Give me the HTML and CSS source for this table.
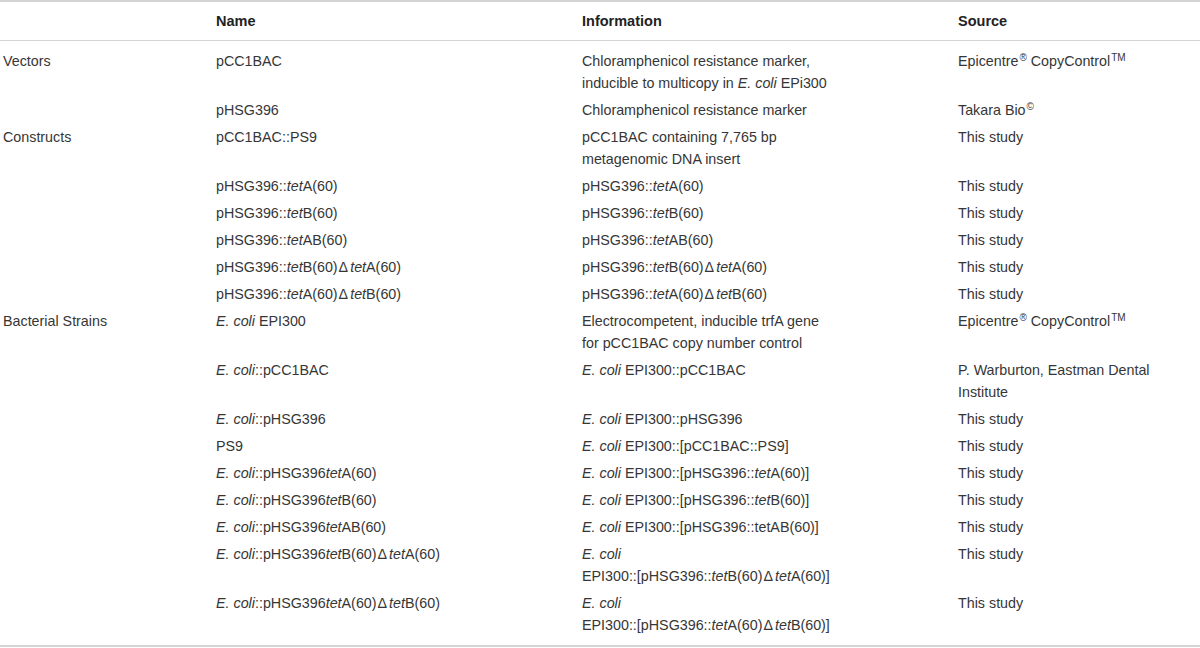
FILE: index.html
```html
<!DOCTYPE html>
<html lang="en">
<head>
<meta charset="utf-8">
<title>Strains and plasmids</title>
<link rel="stylesheet" href="styles.css">
</head>
<body>
<table class="tbl">
  <colgroup>
    <col class="c1"><col class="c2"><col class="c3"><col class="c4">
  </colgroup>
  <thead>
    <tr><th></th><th>Name</th><th>Information</th><th>Source</th></tr>
  </thead>
  <tbody>
    <tr class="first"><td>Vectors</td><td>pCC1BAC</td><td>Chloramphenicol resistance marker,<br>inducible to multicopy in <i>E. coli</i> EPi300</td><td>Epicentre<sup>®</sup> CopyControl<sup>TM</sup></td></tr>
    <tr><td></td><td>pHSG396</td><td>Chloramphenicol resistance marker</td><td>Takara Bio<sup>©</sup></td></tr>
    <tr><td>Constructs</td><td>pCC1BAC::PS9</td><td>pCC1BAC containing 7,765 bp<br>metagenomic DNA insert</td><td>This study</td></tr>
    <tr><td></td><td>pHSG396::<i>tet</i>A(60)</td><td>pHSG396::<i>tet</i>A(60)</td><td>This study</td></tr>
    <tr><td></td><td>pHSG396::<i>tet</i>B(60)</td><td>pHSG396::<i>tet</i>B(60)</td><td>This study</td></tr>
    <tr><td></td><td>pHSG396::<i>tet</i>AB(60)</td><td>pHSG396::<i>tet</i>AB(60)</td><td>This study</td></tr>
    <tr><td></td><td>pHSG396::<i>tet</i>B(60)<span class="d">Δ</span><i>tet</i>A(60)</td><td>pHSG396::<i>tet</i>B(60)<span class="d">Δ</span><i>tet</i>A(60)</td><td>This study</td></tr>
    <tr><td></td><td>pHSG396::<i>tet</i>A(60)<span class="d">Δ</span><i>tet</i>B(60)</td><td>pHSG396::<i>tet</i>A(60)<span class="d">Δ</span><i>tet</i>B(60)</td><td>This study</td></tr>
    <tr><td>Bacterial Strains</td><td><i>E. coli</i> EPI300</td><td>Electrocompetent, inducible trfA gene<br>for pCC1BAC copy number control</td><td>Epicentre<sup>®</sup> CopyControl<sup>TM</sup></td></tr>
    <tr><td></td><td><i>E. coli</i>::pCC1BAC</td><td><i>E. coli</i> EPI300::pCC1BAC</td><td>P. Warburton, Eastman Dental<br>Institute</td></tr>
    <tr><td></td><td><i>E. coli</i>::pHSG396</td><td><i>E. coli</i> EPI300::pHSG396</td><td>This study</td></tr>
    <tr><td></td><td>PS9</td><td><i>E. coli</i> EPI300::[pCC1BAC::PS9]</td><td>This study</td></tr>
    <tr><td></td><td><i>E. coli</i>::pHSG396<i>tet</i>A(60)</td><td><i>E. coli</i> EPI300::[pHSG396::<i>tet</i>A(60)]</td><td>This study</td></tr>
    <tr><td></td><td><i>E. coli</i>::pHSG396<i>tet</i>B(60)</td><td><i>E. coli</i> EPI300::[pHSG396::<i>tet</i>B(60)]</td><td>This study</td></tr>
    <tr><td></td><td><i>E. coli</i>::pHSG396<i>tet</i>AB(60)</td><td><i>E. coli</i> EPI300::[pHSG396::tetAB(60)]</td><td>This study</td></tr>
    <tr><td></td><td><i>E. coli</i>::pHSG396<i>tet</i>B(60)<span class="d">Δ</span><i>tet</i>A(60)</td><td><i>E. coli</i><br>EPI300::[pHSG396::<i>tet</i>B(60)<span class="d">Δ</span><i>tet</i>A(60)]</td><td>This study</td></tr>
    <tr class="last"><td></td><td><i>E. coli</i>::pHSG396<i>tet</i>A(60)<span class="d">Δ</span><i>tet</i>B(60)</td><td><i>E. coli</i><br>EPI300::[pHSG396::<i>tet</i>A(60)<span class="d">Δ</span><i>tet</i>B(60)]</td><td>This study</td></tr>
  </tbody>
</table>
</body>
</html>
```

FILE: styles.css
```css
html, body {
  margin: 0;
  padding: 0;
  background: #ffffff;
}

.tbl {
  width: 1200px;
  border-collapse: collapse;
  table-layout: fixed;
  font-family: "Liberation Sans", Arial, sans-serif;
  font-size: 14.3px;
  color: #363636;
  border-top: 2px solid #d4d4d4;
  border-bottom: 2px solid #d4d4d4;
}

.c1 { width: 213px; }
.c2 { width: 366px; }
.c3 { width: 376px; }
.c4 { width: 245px; }

.tbl th {
  text-align: left;
  font-weight: bold;
  font-size: 14.5px;
  color: #222222;
  height: 38px;
  padding: 0 3px;
  vertical-align: middle;
  border-bottom: 1px solid #d4d4d4;
  line-height: 22px;
}

.tbl td {
  padding: 2.5px 3px;
  line-height: 22px;
  vertical-align: top;
  white-space: nowrap;
}

.tbl tr.first td {
  padding-top: 9px;
}

.tbl tr.last td {
  padding-bottom: 9px;
}

.tbl i {
  font-style: italic;
}

.tbl sup {
  font-size: 10px;
  line-height: 0;
  vertical-align: 5px;
  margin-left: 1px;
}

.d {
  margin: 0 2px 0 1px;
}
```
